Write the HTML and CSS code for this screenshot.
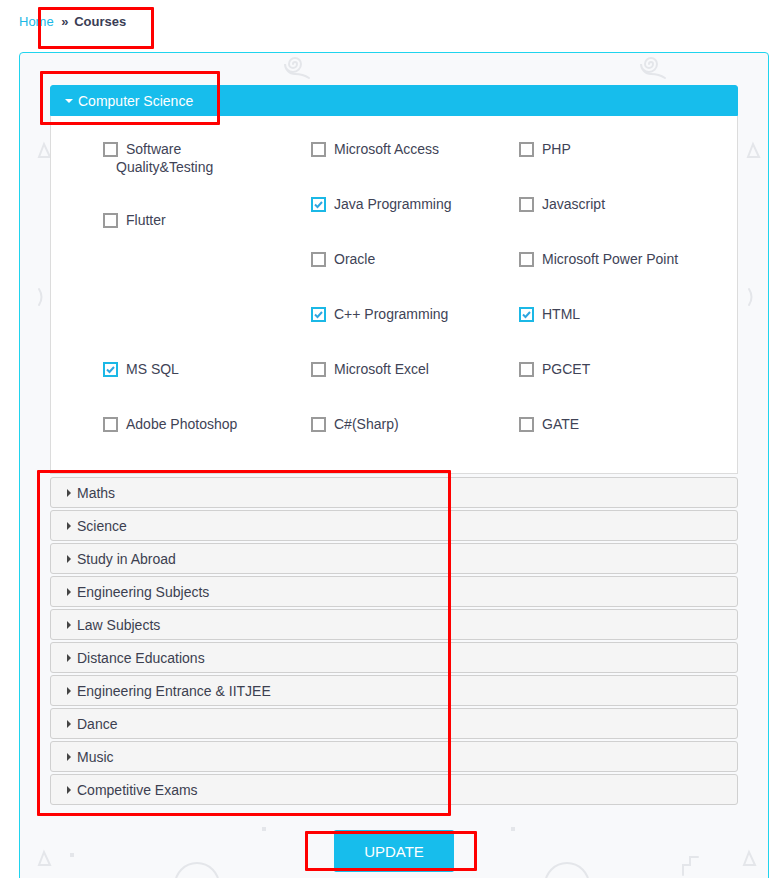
FILE: index.html
```html
<!DOCTYPE html>
<html lang="en">
<head>
    <meta charset="UTF-8">
    <meta name="viewport" content="width=device-width, initial-scale=1.0">
    <title>Courses</title>
    <link rel="stylesheet" href="styles.css">
</head>
<body>
    <div class="page">
        <nav class="breadcrumb">
            <a href="#">Home</a>
            <span class="sep">&raquo;</span>
            <span class="current">Courses</span>
        </nav>

        <div class="courses-box">
            <svg class="pattern" width="750" height="840" viewBox="0 0 750 840">
                <g fill="none" stroke="#e4e6ea" stroke-width="2" stroke-linecap="round">
                    <path d="M273 11 a2 2 0 1 1 4 0 a4 4 0 1 1 -8 0 a6 6 0 1 1 12 0 a8 8 0 1 1 -16 0 a10 10 0 0 0 10 10 q8 0 14 4"/>
                    <path d="M629 11 a2 2 0 1 1 4 0 a4 4 0 1 1 -8 0 a6 6 0 1 1 12 0 a8 8 0 1 1 -16 0 a10 10 0 0 0 10 10 q8 0 14 4"/>
                    <path d="M24 91 l-5 13 l11 0 z"/>
                    <path d="M733 91 l-5 13 l11 0 z"/>
                    <path d="M19 236 q5 8 0 16"/>
                    <path d="M729 236 q5 8 0 16"/>
                    <path d="M24 799 l-5 13 l11 0 z"/>
                    <path d="M729 799 l-5 13 l11 0 z"/>
                    <path d="M155 832 a22 22 0 0 1 44 0"/>
                    <path d="M525 832 a22 22 0 0 1 44 0"/>
                    <path d="M663 822 l0 -10 l7 0 l0 -8 l8 0"/>
                </g>
                <g fill="#e4e6ea">
                    <rect x="242" y="774" width="4" height="4"/>
                    <rect x="491" y="774" width="4" height="4"/>
                    <rect x="50" y="800" width="4" height="4"/>
                </g>
            </svg>

            <div class="accordion">
                <div class="panel open">
                    <div class="panel-head"><span class="caret"></span>Computer Science</div>
                    <div class="panel-body">
                        <div class="course-grid">
                            <label class="course"><span class="box"></span>Software Quality&amp;Testing</label>
                            <label class="course"><span class="box"></span>Microsoft Access</label>
                            <label class="course"><span class="box"></span>PHP</label>

                            <label class="course shifted"><span class="box"></span>Flutter</label>
                            <label class="course"><span class="box checked"><svg viewBox="0 0 11 11"><path d="M2 5.5 L4.5 8 L9 3"/></svg></span>Java Programming</label>
                            <label class="course"><span class="box"></span>Javascript</label>

                            <span class="course empty"></span>
                            <label class="course"><span class="box"></span>Oracle</label>
                            <label class="course"><span class="box"></span>Microsoft Power Point</label>

                            <span class="course empty"></span>
                            <label class="course"><span class="box checked"><svg viewBox="0 0 11 11"><path d="M2 5.5 L4.5 8 L9 3"/></svg></span>C++ Programming</label>
                            <label class="course"><span class="box checked"><svg viewBox="0 0 11 11"><path d="M2 5.5 L4.5 8 L9 3"/></svg></span>HTML</label>

                            <label class="course"><span class="box checked"><svg viewBox="0 0 11 11"><path d="M2 5.5 L4.5 8 L9 3"/></svg></span>MS SQL</label>
                            <label class="course"><span class="box"></span>Microsoft Excel</label>
                            <label class="course"><span class="box"></span>PGCET</label>

                            <label class="course"><span class="box"></span>Adobe Photoshop</label>
                            <label class="course"><span class="box"></span>C#(Sharp)</label>
                            <label class="course"><span class="box"></span>GATE</label>
                        </div>
                    </div>
                </div>

                <div class="panel"><div class="panel-head"><span class="caret"></span>Maths</div></div>
                <div class="panel"><div class="panel-head"><span class="caret"></span>Science</div></div>
                <div class="panel"><div class="panel-head"><span class="caret"></span>Study in Abroad</div></div>
                <div class="panel"><div class="panel-head"><span class="caret"></span>Engineering Subjects</div></div>
                <div class="panel"><div class="panel-head"><span class="caret"></span>Law Subjects</div></div>
                <div class="panel"><div class="panel-head"><span class="caret"></span>Distance Educations</div></div>
                <div class="panel"><div class="panel-head"><span class="caret"></span>Engineering Entrance &amp; IITJEE</div></div>
                <div class="panel"><div class="panel-head"><span class="caret"></span>Dance</div></div>
                <div class="panel"><div class="panel-head"><span class="caret"></span>Music</div></div>
                <div class="panel"><div class="panel-head"><span class="caret"></span>Competitive Exams</div></div>
            </div>

            <div class="actions">
                <button class="update-btn">UPDATE</button>
            </div>
        </div>

        <!-- review marks drawn on the screenshot -->
        <div class="mark mark-crumb"></div>
        <div class="mark mark-head"></div>
        <div class="mark mark-list"></div>
        <div class="mark mark-btn"></div>
    </div>
</body>
</html>
```

FILE: styles.css
```css
body {
    margin: 0;
    font-family: "Liberation Sans", Arial, sans-serif;
    background-color: #fff;
    color: #404356;
}
.page {
    position: relative;
    padding: 0 15px 0 19px;
}
.breadcrumb {
    height: 52px;
    padding-top: 12px;
    box-sizing: border-box;
    font-size: 13px;
    line-height: 20px;
}
.breadcrumb a {
    color: #1bb8e6;
    text-decoration: none;
}
.breadcrumb .sep {
    margin: 0 2px 0 4px;
    color: #3a3d55;
    font-weight: bold;
}
.breadcrumb .current {
    color: #3a3d55;
    font-weight: bold;
}
.courses-box {
    position: relative;
    background-color: #f8f9fb;
    border: 1px solid #1fd4ee;
    border-radius: 4px;
    padding: 32px 30px 40px;
}
.pattern {
    position: absolute;
    top: 0;
    left: 0;
}
.accordion {
    position: relative;
}
.panel + .panel {
    margin-top: 2px;
}
.panel.open + .panel {
    margin-top: 3px;
}
.panel-head {
    height: 31px;
    box-sizing: border-box;
    display: flex;
    align-items: center;
    padding-left: 16px;
    font-size: 14px;
    color: #3c3f50;
    background-color: #f5f5f5;
    border: 1px solid #d0d0d0;
    border-radius: 3px;
}
.caret {
    width: 0;
    height: 0;
    margin-right: 6px;
    border-top: 4px solid transparent;
    border-bottom: 4px solid transparent;
    border-left: 4px solid #444;
}
.open .panel-head {
    background-color: #17bdec;
    border-color: #17bdec;
    border-radius: 3px 3px 0 0;
    color: #fff;
    padding-left: 14px;
}
.open .caret {
    border-left: 4px solid transparent;
    border-right: 4px solid transparent;
    border-top: 4px solid #fff;
    border-bottom: 0;
    margin-right: 5px;
}
.panel-body {
    background-color: #fff;
    border: 1px solid #dcdcdc;
    border-top: 0;
    padding: 24px 0 3px 52px;
}
.course-grid {
    display: grid;
    grid-template-columns: 208px 208px 208px;
    grid-auto-rows: 55px;
}
.course {
    display: block;
    width: 150px;
    padding-left: 13px;
    text-indent: -13px;
    font-size: 14px;
    line-height: 18px;
    color: #404356;
}
.course.shifted {
    margin-top: 16px;
}
.box {
    display: inline-block;
    width: 15px;
    height: 15px;
    box-sizing: border-box;
    border: 2px solid #9a9a9a;
    background-color: #fff;
    margin-right: 8px;
    vertical-align: -3px;
    text-indent: 0;
}
.box.checked {
    border-color: #1bb8e6;
}
.box svg {
    display: block;
    width: 11px;
    height: 11px;
    fill: none;
    stroke: #2fa6e0;
    stroke-width: 2;
}
.actions {
    position: relative;
    display: flex;
    justify-content: center;
    padding-top: 25px;
}
.update-btn {
    width: 120px;
    height: 42px;
    border: none;
    border-radius: 2px;
    background-color: #17bdec;
    color: #fff;
    font-family: "Liberation Sans", Arial, sans-serif;
    font-size: 15px;
    cursor: pointer;
}
.mark {
    position: absolute;
    border: 3px solid #f00;
    box-sizing: border-box;
    border-radius: 1px;
}
.mark-crumb {
    left: 38px;
    top: 7px;
    width: 116px;
    height: 42px;
}
.mark-head {
    left: 40px;
    top: 71px;
    width: 180px;
    height: 54px;
}
.mark-list {
    left: 37px;
    top: 470px;
    width: 414px;
    height: 346px;
}
.mark-btn {
    left: 305px;
    top: 831px;
    width: 172px;
    height: 40px;
}
```
